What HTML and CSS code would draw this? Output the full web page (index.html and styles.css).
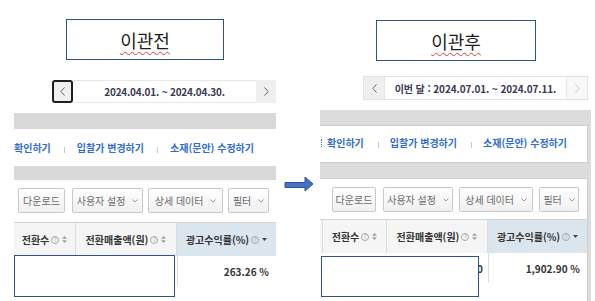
FILE: index.html
```html
<!DOCTYPE html>
<html lang="ko">
<head>
<meta charset="utf-8">
<title>이관전 / 이관후</title>
<link rel="stylesheet" href="styles.css">
</head>
<body>
<div class="page">
  <section class="col col-before">
    <div class="title"><span class="title-text">이관전</span></div>
    <div class="datenav datenav-before">
      <div class="nav-btn prev focused"><svg width="5" height="9" viewBox="0 0 5 9"><polyline points="4.5,0.5 0.8,4.5 4.5,8.5" fill="none" stroke="#666" stroke-width="1"/></svg></div>
      <div class="range">2024.04.01. ~ 2024.04.30.</div>
      <div class="nav-btn next"><svg width="5" height="9" viewBox="0 0 5 9"><polyline points="0.5,0.5 4.2,4.5 0.5,8.5" fill="none" stroke="#666" stroke-width="1"/></svg></div>
    </div>
    <div class="shot shot-before">
      <div class="graybar bar-top"></div>
      <div class="links links-before">
        <span class="link">확인하기</span><span class="sep"></span>
        <span class="link">입찰가 변경하기</span><span class="sep"></span>
        <span class="link">소재(문안) 수정하기</span>
      </div>
      <div class="graybar bar-bottom"></div>
      <div class="toolbar toolbar-before">
        <div class="tbtn w-dl">다운로드</div>
        <div class="tbtn w-user">사용자 설정 <svg class="chev" width="6" height="4" viewBox="0 0 6 4"><polyline points="0.5,0.5 3,3 5.5,0.5" fill="none" stroke="#9a9a9a" stroke-width="1"/></svg></div>
        <div class="tbtn w-detail">상세 데이터 <svg class="chev" width="6" height="4" viewBox="0 0 6 4"><polyline points="0.5,0.5 3,3 5.5,0.5" fill="none" stroke="#9a9a9a" stroke-width="1"/></svg></div>
        <div class="tbtn w-filter">필터 <svg class="chev" width="6" height="4" viewBox="0 0 6 4"><polyline points="0.5,0.5 3,3 5.5,0.5" fill="none" stroke="#9a9a9a" stroke-width="1"/></svg></div>
      </div>
      <div class="thead">
        <div class="th c-conv">전환수<span class="qi">?</span><svg class="sort" width="5" height="7" viewBox="0 0 5 7"><polygon points="2.5,0 5,2.8 0,2.8" fill="#a0a0a0"/><polygon points="2.5,7 5,4.2 0,4.2" fill="#a0a0a0"/></svg></div>
        <div class="th c-sales">전환매출액(원)<span class="qi">?</span><svg class="sort" width="5" height="7" viewBox="0 0 5 7"><polygon points="2.5,0 5,2.8 0,2.8" fill="#a0a0a0"/><polygon points="2.5,7 5,4.2 0,4.2" fill="#a0a0a0"/></svg></div>
        <div class="th c-roas active">광고수익률(%)<span class="qi">?</span><svg class="desc" width="5" height="3" viewBox="0 0 5 3"><polygon points="0,0 5,0 2.5,3" fill="#444"/></svg></div>
      </div>
      <div class="trow">
        <div class="td c-conv"></div>
        <div class="td c-sales">1,230,000</div>
        <div class="td c-roas">263.26 %</div>
      </div>
    </div>
  </section>

  <section class="col col-after">
    <div class="title"><span class="title-text">이관후</span></div>
    <div class="datenav datenav-after">
      <div class="nav-btn prev"><svg width="5" height="9" viewBox="0 0 5 9"><polyline points="4.5,0.5 0.8,4.5 4.5,8.5" fill="none" stroke="#666" stroke-width="1"/></svg></div>
      <div class="range">이번 달 : 2024.07.01. ~ 2024.07.11.</div>
      <div class="nav-btn next disabled"><svg width="5" height="9" viewBox="0 0 5 9"><polyline points="0.5,0.5 4.2,4.5 0.5,8.5" fill="none" stroke="#c8c8c8" stroke-width="1"/></svg></div>
    </div>
    <div class="shot shot-after">
      <div class="card card-links">
        <div class="links links-after">
          <span class="cut-stroke"></span>
          <span class="link">확인하기</span><span class="sep"></span>
          <span class="link">입찰가 변경하기</span><span class="sep"></span>
          <span class="link">소재(문안) 수정하기</span>
        </div>
      </div>
      <div class="card card-table">
        <div class="toolbar toolbar-after">
          <div class="tbtn w-dl2">다운로드</div>
          <div class="tbtn w-user2">사용자 설정 <svg class="chev" width="6" height="4" viewBox="0 0 6 4"><polyline points="0.5,0.5 3,3 5.5,0.5" fill="none" stroke="#9a9a9a" stroke-width="1"/></svg></div>
          <div class="tbtn w-detail2">상세 데이터 <svg class="chev" width="6" height="4" viewBox="0 0 6 4"><polyline points="0.5,0.5 3,3 5.5,0.5" fill="none" stroke="#9a9a9a" stroke-width="1"/></svg></div>
          <div class="tbtn w-filter2">필터 <svg class="chev" width="6" height="4" viewBox="0 0 6 4"><polyline points="0.5,0.5 3,3 5.5,0.5" fill="none" stroke="#9a9a9a" stroke-width="1"/></svg></div>
        </div>
        <div class="thead">
          <div class="th c-stub"></div>
          <div class="th c-conv2">전환수<span class="qi">?</span><svg class="sort" width="5" height="7" viewBox="0 0 5 7"><polygon points="2.5,0 5,2.8 0,2.8" fill="#a0a0a0"/><polygon points="2.5,7 5,4.2 0,4.2" fill="#a0a0a0"/></svg></div>
          <div class="th c-sales">전환매출액(원)<span class="qi">?</span><svg class="sort" width="5" height="7" viewBox="0 0 5 7"><polygon points="2.5,0 5,2.8 0,2.8" fill="#a0a0a0"/><polygon points="2.5,7 5,4.2 0,4.2" fill="#a0a0a0"/></svg></div>
          <div class="th c-roas active">광고수익률(%)<span class="qi">?</span><svg class="desc" width="5" height="3" viewBox="0 0 5 3"><polygon points="0,0 5,0 2.5,3" fill="#444"/></svg></div>
        </div>
        <div class="trow">
          <div class="td c-stub"></div>
          <div class="td c-conv2"></div>
          <div class="td c-sales">12,345,670</div>
          <div class="td c-roas">1,902.90 %</div>
        </div>
      </div>
    </div>
  </section>

  <svg class="arrow" width="30" height="16" viewBox="0 0 30 16"><polygon points="1,6.5 21,6.5 21,1 29,8 21,15 21,11.5 1,11.5" fill="#4472c4" stroke="#2f528f" stroke-width="1"/></svg>
  <div class="mask mask-before"></div>
  <div class="mask mask-after"></div>
</div>
</body>
</html>
```

FILE: styles.css
```css
html, body {
  margin: 0;
  padding: 0;
  background: #ffffff;
}
body {
  width: 595px;
  height: 301px;
  overflow: hidden;
  font-family: "Noto Sans CJK KR", "Noto Sans", sans-serif;
}
.page {
  position: relative;
  display: flex;
  align-items: flex-start;
  height: 301px;
  overflow: hidden;
}
.col {
  display: flex;
  flex-direction: column;
  flex: none;
}
.col > * { flex: none; }
.col-before { width: 300px; }
.col-after { width: 295px; }

/* title boxes */
.title {
  box-sizing: border-box;
  border: 1.5px solid #2f528f;
  display: flex;
  align-items: center;
  justify-content: center;
  font-size: 18px;
  color: #1c1c1c;
  height: 41px;
}
.col-before .title { margin: 19px 0 0 66px; width: 158px; }
.col-after .title { margin: 20px 0 0 76px; width: 160px; }
.title-text {
  line-height: 20px;
  text-decoration: underline wavy #e03a3a;
  text-decoration-thickness: 1px;
  text-underline-offset: 3px;
}

/* date navigator */
.datenav {
  display: flex;
  box-sizing: border-box;
}
.datenav-before { margin: 20px 0 0 52px; width: 224px; height: 23px; }
.datenav-after {
  margin: 15px 0 0 63px;
  width: 225px;
  height: 24px;
  border: 1px solid #e2e2e2;
}
.nav-btn {
  width: 21px;
  flex: none;
  box-sizing: border-box;
  display: flex;
  align-items: center;
  justify-content: center;
  background: #efefef;
}
.datenav-before .next { width: 20px; }
.nav-btn.focused {
  border: 2px solid #1f1f1f;
  border-radius: 3px;
}
.nav-btn.disabled { background: #f8f8f8; border-left: 1px solid #e6e6e6; }
.datenav-after .prev { border-right: 1px solid #e6e6e6; }
.range {
  flex: 1;
  display: flex;
  align-items: center;
  justify-content: center;
  font-size: 10px;
  font-weight: 700;
  color: #3a3a52;
  white-space: pre;
  letter-spacing: -0.2px;
}
.datenav-after .range { letter-spacing: -0.1px; }
.datenav-before .range {
  border-top: 1px solid #e6e6e6;
  border-bottom: 1px solid #e6e6e6;
}

/* screenshot sections */
.shot-before {
  margin: 10px 0 0 14px;
  width: 262px;
}
.shot-after {
  box-sizing: border-box;
  margin: 10px 0 0 20px;
  width: 271px;
  height: 191px;
  background: #dcdcdc;
  padding-top: 15px;
}
.graybar { background: #d9d9d9; }
.bar-top { height: 16px; }
.bar-bottom { height: 14px; }

.card {
  background: #ffffff;
  box-sizing: border-box;
  margin-right: 3px;
  border: 1px solid #cfcfcf;
  border-left: none;
}
.card-links { height: 38px; }
.card-table { margin-top: 15px; height: 123px; border-bottom: none; }

.links {
  display: flex;
  align-items: center;
  font-size: 10px;
  font-weight: 700;
  color: #2f6bd2;
  white-space: pre;
}
.links-before { height: 37px; }
.links-after { height: 34px; }
.link { line-height: 12px; }
.sep {
  width: 1px;
  height: 6px;
  margin: 4px 12px 0 13px;
  background: #c8c8c8;
}
.links-after .sep { margin: 4px 11px 0 14px; }
.cut-stroke {
  width: 0;
  height: 8px;
  border-left: 1.5px dotted #2f6bd2;
  margin: 0 5px 0 1px;
}

/* toolbar */
.toolbar {
  display: flex;
  box-sizing: border-box;
}
.toolbar-before { height: 42px; padding: 8px 0 0 4px; gap: 5px; }
.toolbar-after { height: 40px; padding: 8px 0 0 12px; gap: 6px; }
.tbtn {
  height: 25px;
  box-sizing: border-box;
  border: 1px solid #c8c8c8;
  border-radius: 2px;
  background: linear-gradient(#ffffff, #f0f0f0);
  font-size: 10px;
  color: #6a6a6a;
  display: flex;
  align-items: center;
  justify-content: center;
  white-space: pre;
}
.chev { margin-left: 4px; }
.w-dl { width: 47px; margin-right: 2px; }
.w-user { width: 71px; }
.w-detail { width: 75px; }
.w-filter { width: 41px; }
.w-dl2 { width: 44px; margin-right: 1px; }
.w-user2 { width: 70px; }
.w-detail2 { width: 74px; }
.w-filter2 { width: 40px; }

/* table */
.thead {
  display: flex;
  height: 34px;
  box-sizing: border-box;
  border-top: 1px solid #d4d4d4;
  background: #f5f5f5;
}
.th {
  box-sizing: border-box;
  display: flex;
  align-items: center;
  justify-content: center;
  font-size: 10px;
  font-weight: 700;
  color: #333333;
  border-right: 1px solid #dddddd;
  white-space: pre;
}
.th.active { background: #dbe5ed; border-right: none; }
.c-conv { width: 62px; }
.c-sales { width: 101px; }
.c-roas { width: 99px; }
.c-stub { width: 3px; }
.c-conv2 { width: 64px; }
.qi {
  display: inline-block;
  box-sizing: border-box;
  width: 8px;
  height: 8px;
  border: 1px solid #a8a8a8;
  border-radius: 50%;
  font-size: 6px;
  line-height: 6px;
  text-align: center;
  color: #999999;
  font-weight: 400;
  margin-left: 2px;
}
.sort { margin-left: 3px; }
.desc { margin-left: 3px; }

.trow {
  display: flex;
  height: 30px;
}
.td {
  box-sizing: border-box;
  display: flex;
  align-items: center;
  justify-content: flex-end;
  font-size: 10px;
  font-weight: 700;
  color: #333333;
  padding-right: 8px;
  white-space: pre;
}
.td.c-sales { padding-right: 5px; }
.td.c-roas { border-left: 1px solid #dddddd; padding-right: 7px; }
.td.c-stub, .td.c-conv2 { padding: 0; }

/* overlays */
.arrow {
  position: absolute;
  left: 284px;
  top: 176px;
}
.mask {
  position: absolute;
  box-sizing: border-box;
  border: 1.5px solid #2f528f;
  background: #ffffff;
}
.mask-before { left: 14px; top: 255px; width: 161px; height: 42px; }
.mask-after { left: 321px; top: 256px; width: 158px; height: 41px; }
```
